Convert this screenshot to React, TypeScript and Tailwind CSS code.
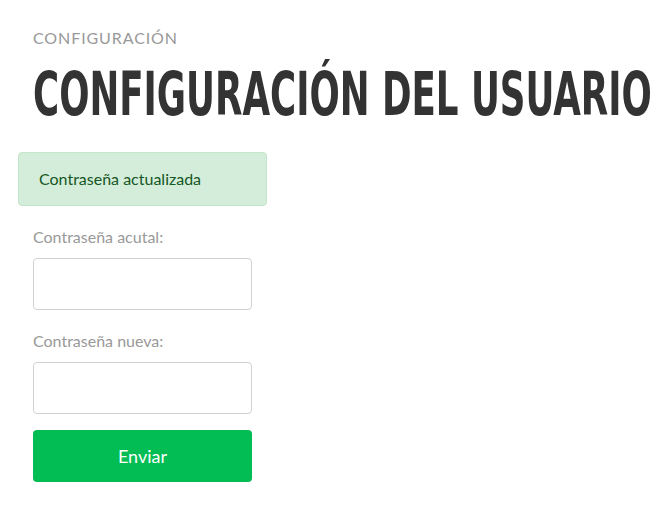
import React from "react";

const App: React.FC = () => {
  return (
    <div className="min-h-screen bg-white px-[33px] pt-[27px] font-['Lato','Open_Sans',sans-serif] overflow-hidden">
      <p className="text-[16px] leading-[22px] tracking-[0.9px] text-[#999999] uppercase">
        Configuración
      </p>
      <h1 className="mt-[15px] h-[60px] whitespace-nowrap font-['Liberation_Sans_Narrow','DejaVu_Sans_Condensed','Liberation_Sans',sans-serif] text-[60px] leading-[60px] font-bold text-[#333333]">
        <span className="inline-block origin-left scale-x-[0.66]">
          CONFIGURACIÓN DEL USUARIO
        </span>
      </h1>
      <div className="mt-[28px] w-[219px]">
        <div className="-mx-[15px] flex h-[54px] items-center rounded border border-[#c3e6cb] bg-[#d4edda] px-[20px] text-[16px] text-[#155724]">
          Contraseña actualizada
        </div>
        <form className="flex flex-col">
          <label className="mt-[20px] text-[16px] leading-[22px] text-[#999999]">
            Contraseña acutal:
          </label>
          <input
            type="password"
            className="mt-[10px] h-[52px] w-full rounded border border-[#d0d0d6] bg-white px-3"
          />
          <label className="mt-[20px] text-[16px] leading-[22px] text-[#999999]">
            Contraseña nueva:
          </label>
          <input
            type="password"
            className="mt-[10px] h-[52px] w-full rounded border border-[#d0d0d6] bg-white px-3"
          />
          <button
            type="button"
            className="mt-[16px] h-[52px] w-full rounded bg-[#02bd54] text-[18px] text-white"
          >
            Enviar
          </button>
        </form>
      </div>
    </div>
  );
};

export default App;
